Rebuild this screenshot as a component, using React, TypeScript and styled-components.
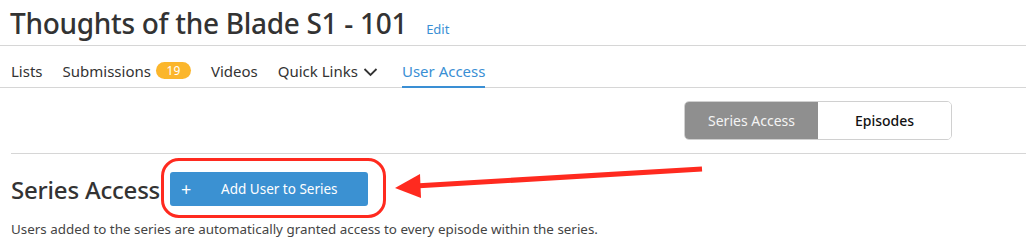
import styled, { createGlobalStyle } from "styled-components";

const GlobalStyle = createGlobalStyle`
  body {
    margin: 0;
    background: #fff;
    font-family: "Noto Sans", "Open Sans", sans-serif;
    color: #333;
  }
`;

const Page = styled.div`
  position: relative;
  width: 1026px;
  height: 246px;
  overflow: hidden;
`;

const Header = styled.div`
  display: flex;
  align-items: baseline;
  gap: 19px;
  height: 46px;
  padding-left: 10px;
  border-bottom: 1px solid #d6d6d6;
  box-sizing: border-box;
  h1 {
    margin: 0;
    font-size: 28px;
    font-weight: 500;
    line-height: 46px;
    color: #333;
    letter-spacing: -0.3px;
  }
`;

const EditLink = styled.a`
  font-size: 13px;
  color: #3a8fd4;
  cursor: pointer;
`;

const Nav = styled.ul`
  display: flex;
  align-items: stretch;
  gap: 20px;
  margin: 0;
  padding: 0 0 0 11px;
  height: 42px;
  border-bottom: 1px solid #d6d6d6;
  box-sizing: border-box;
  list-style: none;
`;

const NavItem = styled.li<{ $active?: boolean }>`
  display: flex;
  align-items: center;
  gap: 5px;
  padding-top: 9px;
  font-size: 15px;
  color: ${(p) => (p.$active ? "#3a8fd4" : "#333")};
  border-bottom: 2px solid ${(p) => (p.$active ? "#3a8fd4" : "transparent")};
  margin-bottom: -1px;
  cursor: pointer;
  svg {
    margin-right: 4px;
    margin-top: 3px;
  }
`;

const Badge = styled.span`
  display: inline-flex;
  align-items: center;
  justify-content: center;
  width: 35px;
  height: 17px;
  border-radius: 9px;
  background: #fbb62c;
  color: #fff;
  font-size: 12px;
  margin-left: 0;
`;

const Toolbar = styled.div`
  display: flex;
  justify-content: flex-end;
  align-items: center;
  height: 66px;
  margin-left: 11px;
  padding-right: 74px;
  border-bottom: 1px solid #d6d6d6;
  box-sizing: border-box;
`;

const Toggle = styled.div`
  display: flex;
  height: 39px;
  border: 1px solid #d0d0d0;
  border-radius: 5px;
  overflow: hidden;
  box-sizing: border-box;
`;

const ToggleButton = styled.button<{ $active?: boolean }>`
  width: 133px;
  border: none;
  font-family: inherit;
  font-size: 14px;
  font-weight: ${(p) => (p.$active ? 400 : 500)};
  background: ${(p) => (p.$active ? "#8f8f8f" : "#fff")};
  color: ${(p) => (p.$active ? "#f4f4f4" : "#111")};
  cursor: pointer;
`;

const Section = styled.div`
  padding: 16px 0 0 11px;
`;

const SectionHead = styled.div`
  display: flex;
  align-items: center;
  gap: 10px;
  h2 {
    margin: 0;
    font-size: 24px;
    font-weight: 500;
    color: #333;
    line-height: 34px;
    padding-top: 3px;
    letter-spacing: -0.2px;
  }
`;

const ButtonWrap = styled.div`
  position: relative;
`;

const Highlight = styled.div`
  position: absolute;
  left: -9px;
  right: -18px;
  top: -14px;
  bottom: -12px;
  border: 3.5px solid #ff2a1f;
  border-radius: 18px;
  pointer-events: none;
`;

const AddButton = styled.button`
  display: flex;
  align-items: center;
  width: 198px;
  height: 34px;
  padding: 0 0 0 11px;
  border: none;
  border-radius: 3px;
  background: #3b91d2;
  color: #fff;
  font-family: inherit;
  font-size: 13.5px;
  cursor: pointer;
  span:first-child {
    font-size: 18px;
    width: 40px;
    text-align: left;
  }
`;

const Description = styled.p`
  margin: 13px 0 0;
  font-size: 13.4px;
  color: #444;
`;

const Arrow = styled.svg`
  position: absolute;
  left: 0;
  top: 0;
  pointer-events: none;
`;

export default function App() {
  return (
    <Page>
      <GlobalStyle />
      <Header>
        <h1>Thoughts of the Blade S1 - 101</h1>
        <EditLink>Edit</EditLink>
      </Header>
      <Nav>
        <NavItem>Lists</NavItem>
        <NavItem>
          Submissions <Badge>19</Badge>
        </NavItem>
        <NavItem>Videos</NavItem>
        <NavItem>
          Quick Links
          <svg width="15" height="10" viewBox="0 0 15 10">
            <polyline points="1.5,2 7.5,8 13.5,2" fill="none" stroke="#333" strokeWidth="1.8" />
          </svg>
        </NavItem>
        <NavItem $active>User Access</NavItem>
      </Nav>
      <Toolbar>
        <Toggle>
          <ToggleButton $active>Series Access</ToggleButton>
          <ToggleButton>Episodes</ToggleButton>
        </Toggle>
      </Toolbar>
      <Section>
        <SectionHead>
          <h2>Series Access</h2>
          <ButtonWrap>
            <AddButton>
              <span>+</span>
              <span>Add User to Series</span>
            </AddButton>
            <Highlight />
          </ButtonWrap>
        </SectionHead>
        <Description>
          Users added to the series are automatically granted access to every episode within the series.
        </Description>
      </Section>
      <Arrow width="1026" height="246" viewBox="0 0 1026 246">
        <line x1="702" y1="169" x2="415" y2="186" stroke="#ff2a1f" strokeWidth="5" />
        <polygon points="395,188 420,174 421,198" fill="#ff2a1f" />
      </Arrow>
    </Page>
  );
}
